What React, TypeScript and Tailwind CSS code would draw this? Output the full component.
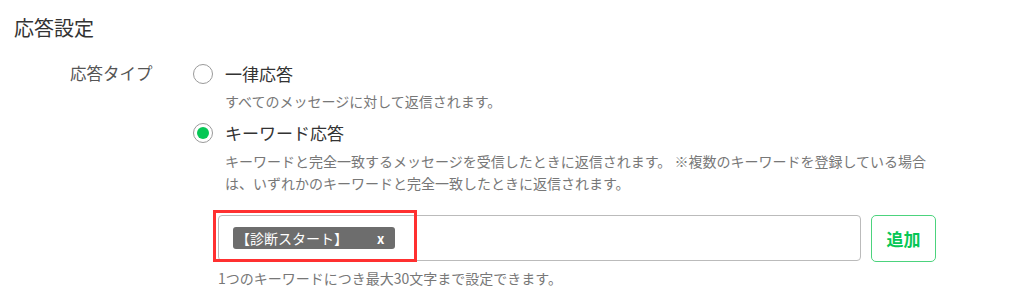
import React from 'react';

const jp = { fontFamily: '"Noto Sans CJK JP", "Noto Sans", sans-serif' };

function Radio({ checked }: { checked?: boolean }) {
  return (
    <span className="flex h-[20px] w-[20px] shrink-0 items-center justify-center rounded-full border border-[#9a9a9a] bg-white">
      {checked && <span className="h-[12px] w-[12px] rounded-full bg-[#06c755]" />}
    </span>
  );
}

export default function App() {
  return (
    <div className="relative h-[302px] w-[1024px] overflow-hidden bg-white text-[#333]" style={jp}>
      {/* 見出し */}
      <h2 className="pl-[14px] pt-[14px] text-[20px] leading-[28px] text-[#333]">応答設定</h2>

      <div className="mt-[20px] flex pl-[70px]">
        <div className="w-[123px] text-[16.5px] leading-[22px] text-[#555]">応答タイプ</div>

        <div className="flex flex-col">
          {/* 一律応答 */}
          <label className="flex h-[24px] items-center gap-[12px]">
            <Radio />
            <span className="text-[17px] leading-[24px] text-[#333]">一律応答</span>
          </label>
          <p className="mt-[5px] pl-[32px] text-[14px] leading-[20px] text-[#777]">
            すべてのメッセージに対して返信されます。
          </p>

          {/* キーワード応答 */}
          <label className="mt-[10px] flex h-[24px] items-center gap-[12px]">
            <Radio checked />
            <span className="text-[17px] leading-[24px] text-[#333]">キーワード応答</span>
          </label>
          <p className="mt-[5px] whitespace-nowrap pl-[32px] text-[14px] leading-[22px] text-[#777]">
            キーワードと完全一致するメッセージを受信したときに返信されます。 ※複数のキーワードを登録している場合
            <br />
            は、いずれかのキーワードと完全一致したときに返信されます。
          </p>

          {/* キーワード入力 */}
          <div className="relative ml-[25px] mt-[21px] flex items-stretch">
            <div className="flex h-[46px] w-[643px] items-center rounded-[4px] border border-[#bbb] pl-[14px]">
              <span className="flex h-[22px] items-center rounded-[3px] bg-[#6d6d6d] pl-[3px] pr-[11px] text-[14px] text-white">
                【診断スタート】
                <span className="ml-[29px] text-[13px] font-bold leading-none">x</span>
              </span>
            </div>
            <button className="ml-[10px] h-[47px] w-[65px] rounded-[5px] border border-[#4cd37d] bg-white text-[17px] font-bold text-[#06c755]">
              追加
            </button>
            <div className="pointer-events-none absolute left-[-5px] top-[-5px] h-[52px] w-[204px] border-[3px] border-[#ff3030]" />
          </div>
          <p className="ml-[25px] mt-[7px] text-[14px] leading-[18px] text-[#777]">
            1つのキーワードにつき最大30文字まで設定できます。
          </p>
        </div>
      </div>
    </div>
  );
}
